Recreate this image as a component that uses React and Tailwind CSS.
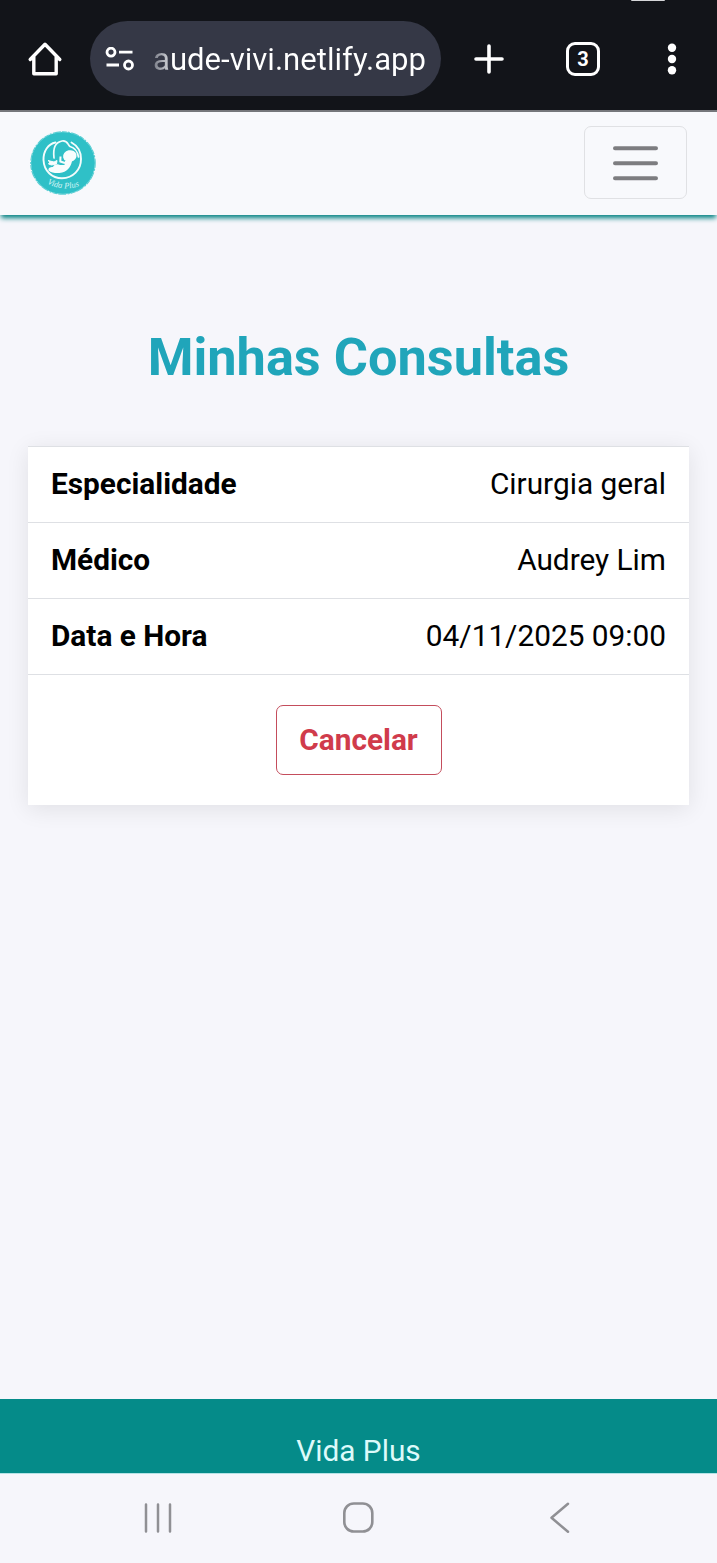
const appointment = [
  { label: 'Especialidade', value: 'Cirurgia geral' },
  { label: 'Médico', value: 'Audrey Lim' },
  { label: 'Data e Hora', value: '04/11/2025 09:00' },
];

function BrowserBar() {
  return (
    <header className="relative flex h-[112px] shrink-0 items-center border-b-2 border-[#77777b] bg-[#121419] pt-[7px] pl-[27px] text-white">
      <span className="absolute top-0 left-[631px] h-px w-[34px] rounded-b-full bg-[#d5d6d8]" />
      <svg className="h-9 w-9 shrink-0" viewBox="0 0 36 36" fill="none" stroke="currentColor" strokeWidth="3.4" strokeLinecap="round" strokeLinejoin="round">
        <path d="M3.200 18.500 18 3.300 32.800 18.500M6.800 15.500v17.200h22.400V15.500" />
      </svg>
      <div className="ml-[27px] flex h-[75px] w-[351px] shrink-0 items-center rounded-full bg-[#353846] pl-[15px]">
        <svg className="h-6 w-[30px] shrink-0" viewBox="0 0 30 24" fill="none" stroke="currentColor" strokeWidth="2.8">
          <circle cx="6" cy="5.2" r="4" />
          <path d="M14 5.2h13.5M1.5 18h12.5" />
          <circle cx="23.5" cy="18" r="4" />
        </svg>
        <span className="mt-0.5 ml-[18px] bg-linear-to-r from-[#777a85] from-0% via-[#c4c6cc] via-[5%] to-white to-[7%] bg-clip-text font-[Roboto,sans-serif] text-[31.1px] leading-10 whitespace-nowrap text-transparent">
          aude-vivi.netlify.app
        </span>
      </div>
      <svg className="ml-[33px] h-[30px] w-[30px] shrink-0" viewBox="0 0 30 30" fill="none" stroke="currentColor" strokeWidth="3.6" strokeLinecap="round">
        <path d="M15 2v26M2 15h26" />
      </svg>
      <div className="ml-[62px] flex h-[34px] w-[34px] shrink-0 items-center justify-center rounded-[9px] border-[3.5px] border-white font-[Roboto,sans-serif] text-[20px] leading-none font-bold">
        3
      </div>
      <svg className="ml-[67px] h-8 w-[10px] shrink-0" viewBox="0 0 10 32" fill="currentColor">
        <circle cx="5" cy="4.7" r="4.2" />
        <circle cx="5" cy="16" r="4.2" />
        <circle cx="5" cy="27.3" r="4.2" />
      </svg>
    </header>
  );
}

function Logo() {
  return (
    <svg className="h-16 w-[66px]" viewBox="0 0 66 64">
      <ellipse cx="33" cy="32" rx="32" ry="31" fill="#2fc0c7" />
      <ellipse cx="33" cy="32" rx="32.2" ry="31.2" fill="none" stroke="#59ced3" strokeWidth="1.2" strokeDasharray="5 1 2 1.5 8 1" />
      <path d="M25.500 11.500C18 13 13.300 20 13.500 29C14 40 22 47.300 32 47.300C43 47 51 39 51 28C51 20 47 14.500 41.500 11.500" fill="none" stroke="#f4fcfc" strokeWidth="1.900" strokeLinecap="round" />
      <path d="M24 27C23 19 24 11.500 32 10C38 9 37.500 14 40 15.500C44 16.500 47.500 20 48.500 26" fill="none" stroke="#f4fcfc" strokeWidth="1.700" strokeLinecap="round" />
      <ellipse cx="39.800" cy="25" rx="6.800" ry="5.800" transform="rotate(-12 39.800 25)" fill="#f8fdfd" />
      <path d="M35 30L42 30C41 36 37 41.500 29.500 42C25 42.300 21 41.500 18.500 39.500C18 37 20 36 23 36C24 33.500 27 32.500 30 34L34.500 34Z" fill="#f8fdfd" />
      <path d="M18 29.500L24 31L27 29.500L26.500 33L21.500 34L18.500 33L20 31Z" fill="#f8fdfd" stroke="#f8fdfd" strokeWidth="1" strokeLinejoin="round" />
      <path d="M30.500 25.500L30.300 30.500L35 32" fill="none" stroke="#f8fdfd" strokeWidth="2" strokeLinejoin="round" />
      <path id="logo-arc" d="M17 52.500Q33 61 51 54.500" fill="none" />
      <text fill="#d9f5f6" fontFamily="Liberation Serif, serif" fontSize="8.500" fontStyle="italic" letterSpacing="0.100">
        <textPath href="#logo-arc">Vida Plus</textPath>
      </text>
    </svg>
  );
}

function SiteNav() {
  return (
    <nav className="relative flex h-[103px] shrink-0 items-center justify-between bg-[#f8f9fc] pr-[30px] pb-0.5 pl-[30px] shadow-[0_4px_5px_-1px_#008080]">
      <Logo />
      <button aria-label="Menu" className="flex h-[73px] w-[103px] items-center justify-center rounded-[7px] border-[1.500px] border-[#e0e1e4]">
        <svg className="h-9 w-12" viewBox="0 0 48 36" fill="none" stroke="#7d7d80" strokeWidth="4" strokeLinecap="round">
          <path d="M3 3.300h41M3 18.300h41M3 33.300h41" />
        </svg>
      </button>
    </nav>
  );
}

function SystemNav() {
  return (
    <div className="flex h-[90px] shrink-0 items-center border-t border-[#b5e3e5] bg-[#f6f6fb] pb-px pl-[142px] text-[#909094]">
      <svg className="h-8 w-8" viewBox="0 0 32 32" fill="none" stroke="currentColor" strokeWidth="2.500" strokeLinecap="round">
        <path d="M4 2.500v27M16 2.500v27M28 2.500v27" />
      </svg>
      <svg className="ml-[168px] h-8 w-8" viewBox="0 0 32 32" fill="none" stroke="currentColor" strokeWidth="2.600">
        <rect x="2.300" y="1.500" width="28" height="28" rx="9.500" />
      </svg>
      <svg className="ml-[168px] h-8 w-8" viewBox="0 0 32 32" fill="none" stroke="currentColor" strokeWidth="2.500" strokeLinecap="round" strokeLinejoin="round">
        <path d="M26 1.800 9.500 15.800 26 29.800" />
      </svg>
    </div>
  );
}

export default function App() {
  return (
    <div className="flex h-[1563px] w-[717px] flex-col overflow-hidden bg-[#f6f6fb] font-[Roboto,sans-serif] text-[29.8px] text-black">
      <BrowserBar />
      <SiteNav />
      <main className="flex grow flex-col px-7">
        <h1 className="mt-[110px] text-center text-[52.3px] leading-[64px] font-bold text-[#20a5ba]">Minhas Consultas</h1>
        <section className="mt-[57px] h-[359px] bg-white shadow-[0_4px_22px_rgba(0,0,0,0.09)]">
          <dl>
            {appointment.map(({ label, value }) => (
              <div key={label} className="flex h-[76px] items-center justify-between border-t border-[#dee0e4] px-[23px]">
                <dt className="font-bold">{label}</dt>
                <dd>{value}</dd>
              </div>
            ))}
          </dl>
          <div className="flex h-[131px] items-center justify-center border-t border-[#dee0e4]">
            <button className="h-[70px] w-[166px] rounded-[7px] border-[1.500px] border-[#c44d5c] font-bold text-[#d03b4b]">Cancelar</button>
          </div>
        </section>
      </main>
      <footer className="flex h-[74px] shrink-0 items-center justify-center bg-[#058b89] pt-[31px] text-[#ddfafa]">Vida Plus</footer>
      <SystemNav />
    </div>
  );
}
